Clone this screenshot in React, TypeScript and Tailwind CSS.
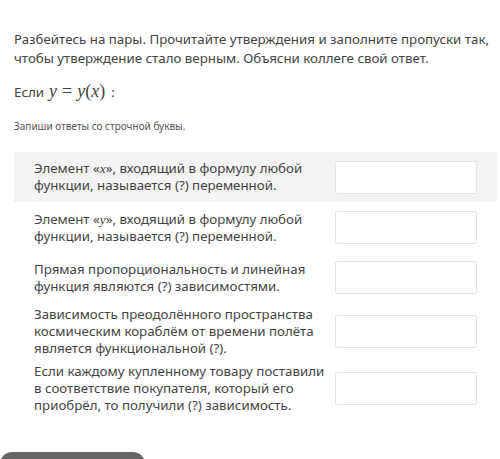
import React from "react";

function M({ children }: { children: React.ReactNode }) {
  return (
    <span className="italic" style={{ fontFamily: '"Liberation Serif", "DejaVu Serif", serif' }}>
      {children}
    </span>
  );
}

function Row({ lines, gray, h }: { lines: React.ReactNode[]; gray?: boolean; h: string }) {
  return (
    <div className={`flex items-center pl-[20px] ${gray ? "bg-[#f3f3f3]" : ""} ${h}`}>
      <div className="w-[301px] text-[13.3px] leading-[17px] text-[#454545]">
        {lines.map((l, i) => (
          <div key={i} className="whitespace-nowrap">
            {l}
          </div>
        ))}
      </div>
      <div className="w-[142px] h-[33px] shrink-0 bg-white border border-[#e4e4e4] rounded-[2px]" />
    </div>
  );
}

const serif = { fontFamily: '"Liberation Serif", "DejaVu Serif", serif' };

export default function App() {
  return (
    <div
      className="w-[500px] h-[459px] bg-white overflow-hidden relative text-[#444]"
      style={{ fontFamily: '"Noto Sans", "Open Sans", sans-serif' }}
    >
      <div className="pt-[30px] pl-[14px] pr-[4px] text-[13.3px] leading-[19px] text-[#444]">
        Разбейтесь на пары. Прочитайте утверждения и заполните пропуски так, чтобы утверждение стало верным. Объясни коллеге свой ответ.
      </div>
      <div className="mt-[12px] pl-[14px] text-[13.3px] leading-[20px] text-[#444] flex items-baseline">
        <span>Если</span>
        <span className="text-[18px] ml-[5px]">
          <M>y</M>
          <span style={serif} className="mx-[5px]">=</span>
          <M>y</M>
          <span style={serif}>(</span>
          <M>x</M>
          <span style={serif}>)</span>
        </span>
        <span className="ml-[6px]">:</span>
      </div>
      <div className="mt-[17px] pl-[14px] text-[10px] leading-[14px] text-[#555]">
        Запиши ответы со строчной буквы.
      </div>
      <div className="mt-[19px] ml-[14px] mr-[3px]">
        <Row
          gray
          h="h-[50px]"
          lines={[
            <>Элемент «<M>x</M>», входящий в формулу любой</>,
            "функции, называется (?) переменной.",
          ]}
        />
        <Row
          h="h-[51px]"
          lines={[
            <>Элемент «<M>y</M>», входящий в формулу любой</>,
            "функции, называется (?) переменной.",
          ]}
        />
        <Row
          h="h-[49px]"
          lines={["Прямая пропорциональность и линейная", "функция являются (?) зависимостями."]}
        />
        <Row
          h="h-[58px]"
          lines={[
            "Зависимость преодолённого пространства",
            "космическим кораблём от времени полёта",
            "является функциональной (?).",
          ]}
        />
        <Row
          h="h-[56px]"
          lines={[
            "Если каждому купленному товару поставили",
            "в соответствие покупателя, который его",
            "приобрёл, то получили (?) зависимость.",
          ]}
        />
      </div>
      <div className="absolute left-0 top-[452px] w-[145px] h-[20px] rounded-t-[12px] bg-[#666]" />
    </div>
  );
}
